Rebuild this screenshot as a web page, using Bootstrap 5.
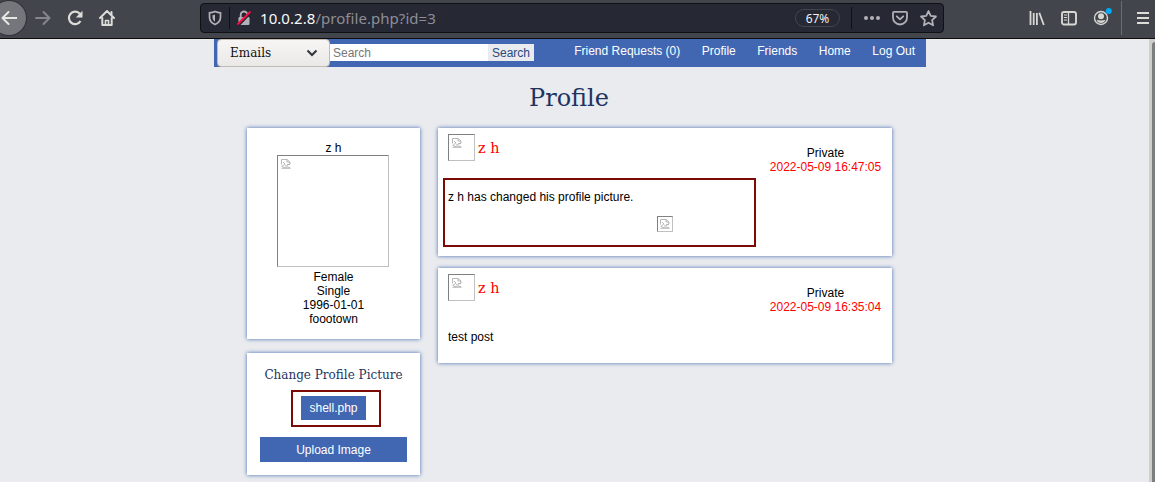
<!DOCTYPE html>
<html lang="en">
<head>
<meta charset="utf-8">
<meta name="viewport" content="width=device-width, initial-scale=1">
<title>Profile</title>
<link href="https://cdn.jsdelivr.net/npm/bootstrap@5.3.0/dist/css/bootstrap.min.css" rel="stylesheet">
<style>
  html, body { height: 100%; overflow: hidden; }
  body { background: #e9ebee; color: #000; font: 12px/14px "Liberation Sans", Arial, sans-serif; }
  svg { display: block; flex: none; }
  .serif { font-family: "DejaVu Serif", serif; font-weight: 400; }

  /* browser toolbar */
  .toolbar { height: 39px; background: #42454c; border-bottom: 1px solid #0c0c0d; color: #d7d7db; padding-bottom: 2px; }
  .back { width: 34px; height: 34px; margin-left: -8px; background: #74767b; box-shadow: 0 0 0 1px #303238; border-radius: 50%; padding: 9px; }
  .i-forward { margin-left: 9px; }
  .i-reload { margin-left: 16px; }
  .i-home { margin-left: 16px; }
  .urlbar { width: 744px; height: 30px; margin-left: 85px; background: #262834; border: 1px solid #101114; border-radius: 4px; }
  .i-shield { margin-left: 7px; }
  .i-lock { margin-left: 6px; }
  .i-page { margin-left: 12px; }
  .i-star { margin: 0 6px 0 12px; }
  .i-library { margin-left: 85px; }
  .i-sidebar { margin-left: 16px; }
  .i-account { margin-left: 16px; }
  .i-menu { margin-left: 14px; }
  .url { font: 15px/20px "Noto Sans", sans-serif; letter-spacing: .05px; color: #8d8e95; margin-left: 8px; }
  .url span { color: #f9f9fa; }
  .zoom { width: 45px; height: 18px; margin-right: 11px; border: 1px solid #42454e; border-radius: 10px; font: 12px/17px "Noto Sans", sans-serif; color: #f0f0f4; }
  .bar { width: 1px; background: #101114; height: 22px; }
  .bar.tall { background: #6b6d72; height: 34px; }

  /* page */
  .viewport { height: 443px; }
  .track { width: 6px; background: #cfcecb; padding: 3px 0 0 3px; }
  .thumb { height: 100%; background: #7b7f80; border-radius: 4px 0 0 0; }
  .topnav { width: 712px; height: 28px; margin-left: 214px; background: #4267b2; padding-left: 3px; }
  .picker { width: 113px; height: 28px; background: linear-gradient(#f7f6f5, #ebe9e7); border: 1px solid #c3bab1; border-radius: 4px; padding: 0 11px 0 12px; color: #111; }
  .find { width: 158px; height: 17px; margin-top: 5px; background: #fff; color: #777; padding: 2px 3px; line-height: 14px; }
  .go { width: 46px; height: 17px; margin-top: 5px; background: #e9ebee; color: #29487d; padding-top: 2px; text-align: center; line-height: 14px; }
  .links { gap: 21.500px; padding: 5px 11px 0 0; }
  .links a { color: #fff; text-decoration: none; white-space: nowrap; }
  h1.title { font-size: 24px; line-height: 28px; color: #1d3461; margin: 17px 0 16px; padding-right: 11px; text-align: center; }
  .cols { gap: 18px; margin-left: 247px; }
  .side { width: 173px; }
  .feed { width: 454px; }
  .panel { background: #fff; box-shadow: 0 0 4px #4267b2; }
  .broken { border: 1px solid; border-color: #808080 #c0c0c0 #c0c0c0 #808080; padding: 3px; }
  .avatar { width: 112px; height: 112px; margin: 0 0 3px 30px; }
  .thumbnail { width: 27px; height: 27px; }
  .tiny { width: 16px; height: 16px; padding: 2px; }
  .about { height: 211px; padding-top: 13px; }
  .change { height: 122px; margin-top: 14px; padding: 15px 13px 0; }
  .change h2 { font-size: 12px; line-height: 15px; color: #1d3461; white-space: nowrap; margin: 0 0 7px; }
  .marked { border: 2px solid #7d0b05; }
  .file { width: 90px; height: 37px; margin: 0 0 10px 31px; padding: 4px 0 0 8px; }
  .blue { background: #4267b2; color: #fff; }
  .file .blue { width: 65px; height: 24px; line-height: 24px; }
  .upload { height: 25px; line-height: 26px; }
  .post { height: 95px; padding: 6px 10px 0; }
  .post.with-picture { height: 128px; margin-bottom: 12px; }
  .post .who { font-size: 14.400px; line-height: 20px; color: #f00; margin: 4px 0 0 3px; }
  .meta { width: 113px; margin-top: 12px; white-space: nowrap; }
  .meta span { color: #f00; }
  .changed { width: 313px; height: 69px; margin: 4px 0 0 -5px; padding: 10px 3px; }
  .changed .tiny { margin: 12px 0 0 209px; }
</style>
</head>
<body>
<svg width="0" height="0" class="position-absolute">
  <symbol id="noimg" viewBox="0 0 10 10"><path d="M.5 5.500V.5H6L9 3v2M6 .5V3h3M2 3l2 2M.5 7.500L3.500 5.500l2 1.500L9 4.500M.5 9.300h9M1 7.500l2 1 3-.5 3 .5M6 5.500h3" fill="none" stroke="#b0b0b0" stroke-width=".9"/></symbol>
</svg>
<header class="toolbar d-flex align-items-center">
  <div class="back"><svg width="16" height="16" viewBox="0 0 16 16" fill="none" stroke="#e6e6e2" stroke-width="2" stroke-linecap="round" stroke-linejoin="round"><path d="M15.500 8H1.500M7.500 2l-6 6 6 6"/></svg></div>
  <svg class="i-forward" width="16" height="16" viewBox="0 0 16 16" fill="none" stroke="#85878b" stroke-width="2" stroke-linecap="round" stroke-linejoin="round"><path d="M1 8h13.500M8.500 2l6 6-6 6"/></svg>
  <svg class="i-reload" width="16" height="16" viewBox="0 0 16 16" fill="none" stroke="#dcdcd8" stroke-width="2.200"><path d="M13.500 11A6.200 6.200 0 1 1 12.500 3.500L14 5"/><path d="M15.500.8v6.700H8.800z" fill="#dcdcd8" stroke="none"/></svg>
  <svg class="i-home" width="16" height="16" viewBox="0 0 16 16" fill="none" stroke="#dcdcd8" stroke-width="2" stroke-linecap="round" stroke-linejoin="round"><path d="M1 8l7-7 7 7M3.300 8v7h9.400V8M12.500 2v3"/><path d="M6.500 14.500v-4h3v4" stroke-width="1.600"/></svg>
  <div class="urlbar d-flex align-items-center">
    <svg class="i-shield" width="14" height="16" viewBox="0 0 14 16" fill="none" stroke="#b1b1b6" stroke-width="1.700"><path d="M1.500 2.800Q4.500 2.600 7 1.500 9.500 2.600 12.500 2.800V7c0 4-2.500 6.300-5.500 7.500C4 13.300 1.500 11 1.500 7z"/><path d="M7 4.500Q5.700 5 4.500 5.200V7c0 2 .8 3.600 2.500 4.700z" fill="#b1b1b6" stroke="none"/></svg>
    <div class="bar i-shield"></div>
    <svg class="i-lock" width="16" height="16" viewBox="0 0 16 16"><rect x="2.500" y="7" width="11" height="8" rx="1.200" fill="#b1b1b6"/><path d="M4.700 7V4.800a3.300 3.300 0 0 1 6.600 0V7" fill="none" stroke="#b1b1b6" stroke-width="1.800"/><path d="M2 15.500L15 2" stroke="#262834" stroke-width="3"/><path d="M1.500 14.500L14.500 1.500" stroke="#f50f45" stroke-width="2"/></svg>
    <div class="url"><span>10.0.2.8</span>/profile.php?id=3</div>
    <div class="zoom text-center ms-auto">67%</div>
    <div class="bar"></div>
    <svg class="i-page" width="16" height="16" viewBox="0 0 16 16" fill="#b1b1b6"><circle cx="2" cy="8" r="2"/><circle cx="8" cy="8" r="2"/><circle cx="14" cy="8" r="2"/></svg>
    <svg class="i-page" width="16" height="16" viewBox="0 0 16 16" fill="none" stroke="#b1b1b6" stroke-width="1.800" stroke-linecap="round" stroke-linejoin="round"><path d="M2 1.800h12q1 0 1 1V7.500a7 7 0 0 1-14 0V2.800q0-1 1-1z"/><path d="M4.800 6.300L8 9.300l3.200-3"/></svg>
    <svg class="i-star" width="17" height="17" viewBox="0 0 16 16" fill="none" stroke="#b1b1b6" stroke-width="1.700" stroke-linejoin="round"><path d="M8 1l2.100 4.500 4.900.6-3.600 3.400.9 4.900L8 12l-4.300 2.400.9-4.900L1 6.100l4.900-.6z"/></svg>
  </div>
  <svg class="i-library" width="16" height="16" viewBox="0 0 16 16" stroke="#d7d7d3" stroke-width="1.800"><path d="M1.500 1v14M4.700 3v12M7.900 3v12M10.300 2.800L14.800 15"/></svg>
  <svg class="i-sidebar" width="16" height="16" viewBox="0 0 16 16" fill="none" stroke="#d7d7d3" stroke-width="1.900"><rect x="1" y="2" width="14" height="12.500" rx="2"/><path d="M7.500 2v12" stroke-width="1.300"/><path d="M3 5h3M3 7.500h3M3 10h3" stroke-width="1.100"/></svg>
  <svg class="i-account" width="20" height="22" viewBox="0 0 20 22"><circle cx="8" cy="11" r="6.500" fill="none" stroke="#d7d7d3" stroke-width="1.400"/><circle cx="8" cy="9.300" r="3" fill="#d7d7d3"/><path d="M3.800 12.700q4.200 1.500 8.400 0Q11.500 16 8 16t-4.200-3.300z" fill="#d7d7d3"/><circle cx="15.800" cy="4" r="3" fill="#00a8f5"/></svg>
  <div class="bar tall ms-2"></div>
  <svg class="i-menu" width="14" height="14" viewBox="0 0 14 14" stroke="#dcdcd8" stroke-width="2"><path d="M1 2h12M1 7h12M1 12h12"/></svg>
</header>
<div class="viewport d-flex">
  <main class="flex-grow-1">
    <nav class="topnav d-flex">
      <div class="picker serif d-flex align-items-center justify-content-between">Emails
        <svg width="12" height="8" viewBox="0 0 12 8" fill="none" stroke="#30363a" stroke-width="2"><path d="M1.500 1.500L6 6l4.500-4.500"/></svg></div>
      <div class="find">Search</div>
      <div class="go">Search</div>
      <div class="links d-flex ms-auto"><a href="#">Friend Requests (0)</a><a href="#">Profile</a><a href="#">Friends</a><a href="#">Home</a><a href="#">Log Out</a></div>
    </nav>
    <h1 class="title serif">Profile</h1>
    <div class="cols d-flex align-items-start">
      <aside class="side text-center">
        <section class="panel about">
          <div>z h</div>
          <div class="broken avatar"><svg width="10" height="10"><use href="#noimg"/></svg></div>
          <div>Female</div><div>Single</div><div>1996-01-01</div><div>foootown</div>
        </section>
        <section class="panel change">
          <h2 class="serif">Change Profile Picture</h2>
          <div class="marked file"><div class="blue">shell.php</div></div>
          <div class="blue upload">Upload Image</div>
        </section>
      </aside>
      <div class="feed">
        <article class="panel post with-picture">
          <div class="d-flex">
            <div class="broken thumbnail"><svg width="10" height="10"><use href="#noimg"/></svg></div>
            <div class="who serif">z h</div>
            <div class="meta text-center ms-auto">Private<br><span>2022-05-09 16:47:05</span></div>
          </div>
          <div class="marked changed">z h has changed his profile picture.
            <div class="broken tiny"><svg width="10" height="10"><use href="#noimg"/></svg></div></div>
        </article>
        <article class="panel post">
          <div class="d-flex">
            <div class="broken thumbnail"><svg width="10" height="10"><use href="#noimg"/></svg></div>
            <div class="who serif">z h</div>
            <div class="meta text-center ms-auto">Private<br><span>2022-05-09 16:35:04</span></div>
          </div>
          <div class="mt-3">test post</div>
        </article>
      </div>
    </div>
  </main>
  <div class="track"><div class="thumb"></div></div>
</div>
<script src="https://cdn.jsdelivr.net/npm/bootstrap@5.3.0/dist/js/bootstrap.bundle.min.js"></script>
</body>
</html>
